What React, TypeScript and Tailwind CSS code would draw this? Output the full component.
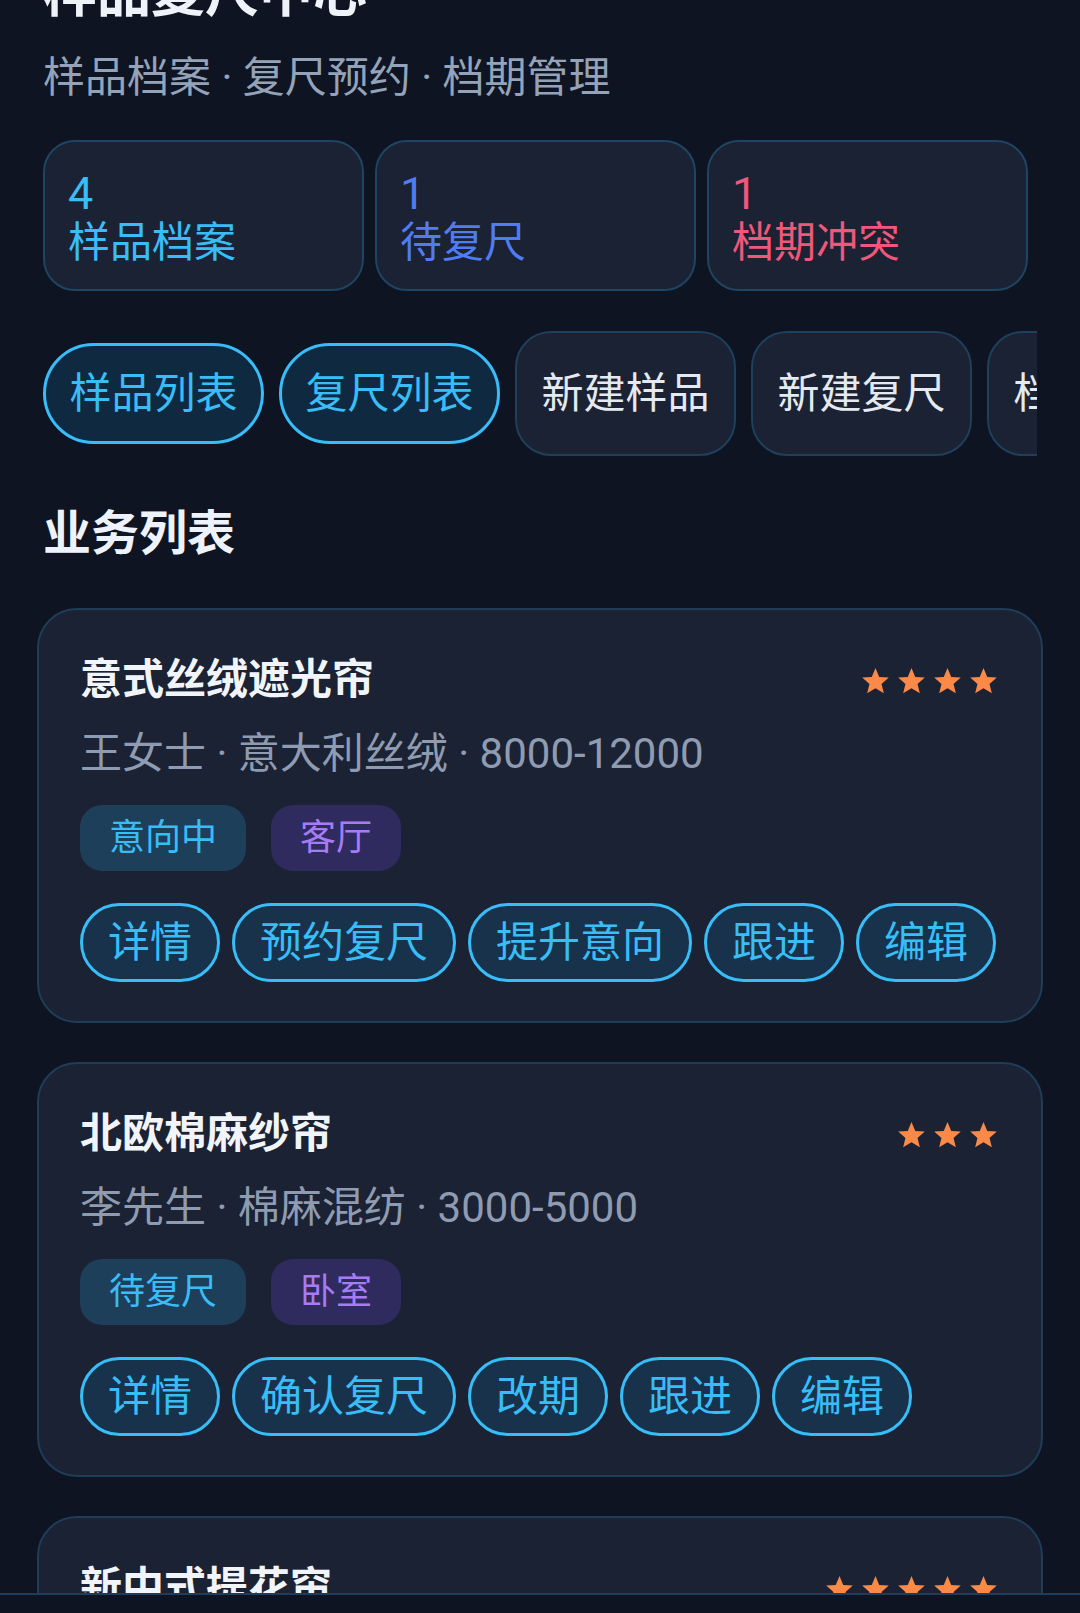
import React from "react"

const stats = [
  { value: "4", label: "样品档案", color: "text-[#38bdf8]" },
  { value: "1", label: "待复尺", color: "text-[#4f7cf2]" },
  { value: "1", label: "档期冲突", color: "text-[#f0587b]" },
]

const tabs = [
  { label: "样品列表", active: true },
  { label: "复尺列表", active: true },
  { label: "新建样品", active: false },
  { label: "新建复尺", active: false },
  { label: "档期管理", active: false },
]

type Item = {
  name: string
  stars: number
  meta: string
  status: string
  room: string
  actions: string[]
}

const items: Item[] = [
  {
    name: "意式丝绒遮光帘",
    stars: 4,
    meta: "王女士 · 意大利丝绒 · 8000-12000",
    status: "意向中",
    room: "客厅",
    actions: ["详情", "预约复尺", "提升意向", "跟进", "编辑"],
  },
  {
    name: "北欧棉麻纱帘",
    stars: 3,
    meta: "李先生 · 棉麻混纺 · 3000-5000",
    status: "待复尺",
    room: "卧室",
    actions: ["详情", "确认复尺", "改期", "跟进", "编辑"],
  },
  {
    name: "新中式提花帘",
    stars: 5,
    meta: "张女士 · 真丝提花 · 15000-20000",
    status: "已复尺",
    room: "书房",
    actions: ["详情", "查看档期", "跟进", "编辑"],
  },
]

function Star() {
  return (
    <svg width="29" height="28" viewBox="0 0 24 23" className="shrink-0">
      <path
        d="M12 0.8l3.1 7.3 7.9 0.6-6 5.2 1.9 7.7L12 17.4l-6.9 4.2 1.9-7.7-6-5.2 7.9-0.6z"
        fill="#fb8a48"
      />
    </svg>
  )
}

function ItemCard({ item }: { item: Item }) {
  return (
    <div className="rounded-[40px] border-2 border-[#1f3d58] bg-[#1a2233] px-[41px] pt-[38px] pb-[39px]">
      <div className="flex items-center justify-between">
        <div className="text-[42px] leading-[63px] font-bold text-[#f1f5f9]">{item.name}</div>
        <div className="mt-[3px] mr-[2px] flex gap-[7px]">
          {Array.from({ length: item.stars }).map((_, i) => (
            <Star key={i} />
          ))}
        </div>
      </div>
      <div className="mt-[11px] text-[42px] leading-[63px] text-[#8f9bb1]">{item.meta}</div>
      <div className="mt-[20px] flex gap-[25px]">
        <span className="flex h-[66px] items-center rounded-[22px] bg-[#1e3f5a] px-[29px] text-[36px] text-[#38bdf8]">
          {item.status}
        </span>
        <span className="flex h-[66px] items-center rounded-[22px] bg-[#2f2b5e] px-[29px] text-[36px] text-[#a67cf6]">
          {item.room}
        </span>
      </div>
      <div className="mt-[32px] flex gap-[12px]">
        {item.actions.map((a) => (
          <button
            key={a}
            className="flex h-[79px] shrink-0 items-center whitespace-nowrap rounded-full border-[3px] border-[#38bdf8] bg-[#17324a] px-[25px] text-[42px] text-[#38bdf8]"
          >
            {a}
          </button>
        ))}
      </div>
    </div>
  )
}

export default function App() {
  return (
    <div className="relative min-h-screen overflow-hidden bg-[#0e1422] [font-family:Roboto,'Noto_Sans_CJK_SC',sans-serif]">
      <div className="px-[43px]">
        <h1 className="-mt-[38px] text-[54px] leading-[64px] font-bold text-[#eef2f9]">样品复尺中心</h1>
        <p className="mt-[22px] text-[42px] leading-[59px] text-[#94a3b8]">样品档案 · 复尺预约 · 档期管理</p>

        <div className="mt-[33px] flex gap-[11px]">
          {stats.map((s) => (
            <div
              key={s.label}
              className="h-[151px] w-[321px] rounded-[32px] border-2 border-[#1e4563] bg-[#1a2233] px-[23px] pt-[28px]"
            >
              <div className={`text-[45px] leading-[48px] ${s.color}`}>{s.value}</div>
              <div className={`text-[42px] leading-[50px] ${s.color}`}>{s.label}</div>
            </div>
          ))}
        </div>

        <div className="mt-[40px] flex h-[125px] items-center gap-[15px] overflow-hidden">
          {tabs.map((t) =>
            t.active ? (
              <div
                key={t.label}
                className="flex h-[101px] w-[221px] shrink-0 items-center justify-center rounded-full border-[3px] border-[#38bdf8] bg-[#0f2a40] text-[42px] text-[#38bdf8]"
              >
                {t.label}
              </div>
            ) : (
              <div
                key={t.label}
                className="flex h-[125px] w-[221px] shrink-0 items-center justify-center rounded-[36px] border-2 border-[#1f3f5c] bg-[#1a2233] text-[42px] text-[#e5e9f0]"
              >
                {t.label}
              </div>
            )
          )}
        </div>

        <h2 className="mt-[44px] text-[48px] leading-[67px] font-bold text-[#eef2fb]">业务列表</h2>
      </div>

      <div className="mt-[41px] flex flex-col gap-[39px] px-[37px]">
        {items.map((it) => (
          <ItemCard key={it.name} item={it} />
        ))}
      </div>

      <div className="fixed right-0 bottom-0 left-0 h-[20px] border-t-2 border-[#1f3d58] bg-[#0e1422]" />
    </div>
  )
}
